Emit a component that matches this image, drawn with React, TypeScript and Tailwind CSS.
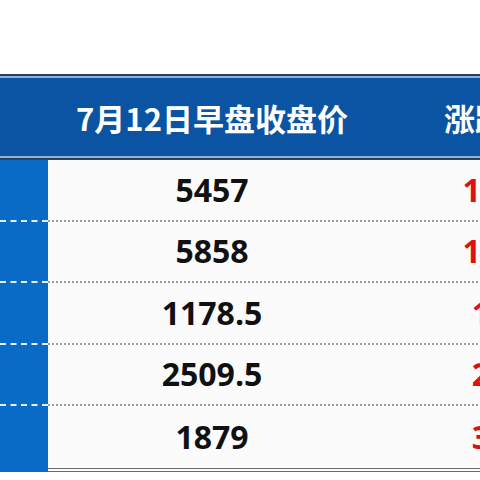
const rows = [
  { price: '5457', change: '1.34%' },
  { price: '5858', change: '1.21%' },
  { price: '1178.5', change: '1.2%' },
  { price: '2509.5', change: '2.5%' },
  { price: '1879', change: '3.1%' },
];

const font = { fontFamily: '"Open Sans", "Noto Sans CJK SC", sans-serif' };
const cjk = { fontFamily: '"Noto Sans CJK SC", sans-serif' };

export default function App() {
  return (
    <div className="w-[480px] h-[480px] overflow-hidden bg-white" style={font}>
      <div className="w-[642px] pt-[74px]">
        {/* header */}
        <div className="border-t-2 border-b-2 border-[#2f3e57]">
          <div className="border-t-2 border-b-2 border-[#8fb2dc] bg-[#0b54a4] h-[82px] flex items-center">
            <div className="w-[48px]" />
            <div className="w-[328px] text-center text-white font-bold text-[31px] leading-none" style={cjk}>
              7月12日早盘收盘价
            </div>
            <div className="flex-1 pl-[68px] text-white font-bold text-[31px] leading-none" style={cjk}>
              涨跌幅
            </div>
          </div>
        </div>

        {/* body */}
        <div className="flex">
          <div className="w-[48px] bg-[#0a6bc6]">
            {rows.map((r, i) => (
              <div
                key={r.price}
                className={
                  i < rows.length - 1
                    ? 'h-[61.5px] border-b-2 border-dashed border-white/90'
                    : 'h-[61.5px]'
                }
              />
            ))}
          </div>
          <div className="flex-1 bg-[#fbfbfb] border-b-[4px] border-double border-[#6b6b6b]">
            {rows.map((r, i) => (
              <div
                key={r.price}
                className={
                  'h-[61.5px] flex items-center ' +
                  (i < rows.length - 1 ? 'border-b-2 border-dotted border-[#9a9a9a]' : '')
                }
              >
                <div className="w-[328px] text-center text-[32px] font-bold text-[#111] leading-none">
                  {r.price}
                </div>
                <div className="flex-1 text-center text-[32px] font-bold text-[#e01010] leading-none">
                  {r.change}
                </div>
              </div>
            ))}
          </div>
        </div>
      </div>
    </div>
  );
}
